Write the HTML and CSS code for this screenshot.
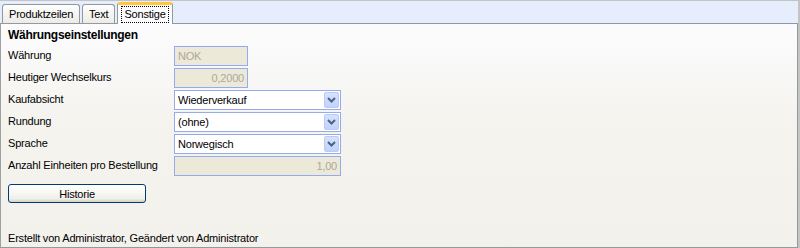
FILE: index.html
```html
<!DOCTYPE html>
<html lang="de">
<head>
    <meta charset="UTF-8">
    <title>Sonstige</title>
    <link rel="stylesheet" href="styles.css">
</head>
<body>
    <div class="window">
        <div class="tab-strip">
            <div class="tab">Produktzeilen</div>
            <div class="tab">Text</div>
            <div class="tab active"><span class="focus">Sonstige</span></div>
        </div>
        <div class="tab-page">
            <h1>Währungseinstellungen</h1>
            <div class="fields">
                <label>Währung</label>
                <div class="input short disabled">NOK</div>

                <label>Heutiger Wechselkurs</label>
                <div class="input short disabled num">0,2000</div>

                <label>Kaufabsicht</label>
                <div class="input select">
                    <span>Wiederverkauf</span>
                    <span class="drop"><svg width="9" height="6" viewBox="0 0 9 6"><path d="M1 1 L4.5 4.5 L8 1" fill="none" stroke="#4d6185" stroke-width="2"/></svg></span>
                </div>

                <label>Rundung</label>
                <div class="input select">
                    <span>(ohne)</span>
                    <span class="drop"><svg width="9" height="6" viewBox="0 0 9 6"><path d="M1 1 L4.5 4.5 L8 1" fill="none" stroke="#4d6185" stroke-width="2"/></svg></span>
                </div>

                <label>Sprache</label>
                <div class="input select">
                    <span>Norwegisch</span>
                    <span class="drop"><svg width="9" height="6" viewBox="0 0 9 6"><path d="M1 1 L4.5 4.5 L8 1" fill="none" stroke="#4d6185" stroke-width="2"/></svg></span>
                </div>

                <label>Anzahl Einheiten pro Bestellung</label>
                <div class="input disabled num">1,00</div>
            </div>
            <button type="button">Historie</button>
            <div class="footer">Erstellt von Administrator, Geändert von Administrator</div>
        </div>
    </div>
</body>
</html>
```

FILE: styles.css
```css
body {
    margin: 0;
    font-family: "Liberation Sans", Arial, sans-serif;
    font-size: 11px;
    letter-spacing: -0.2px;
    color: #000;
    background-color: #c4c4c4;
}

.window {
    width: 798px;
    height: 247px;
    margin-top: 1px;
    display: flex;
    flex-direction: column;
    background-color: #e6eefe;
}

.tab-strip {
    display: flex;
    align-items: flex-end;
    height: 22px;
    padding-left: 2px;
    gap: 2px;
}

.tab {
    height: 19px;
    padding: 0 6px;
    line-height: 18px;
    border: 1px solid #919b9c;
    border-bottom: none;
    border-radius: 3px 3px 0 0;
    background: linear-gradient(#fefefe, #ecebe6);
    box-sizing: border-box;
}

.tab.active {
    height: 22px;
    padding: 1px 3px 0;
    line-height: 15px;
    background: #fcfcfe;
    border-top: 3px solid #ffc83c;
    position: relative;
    top: 1px;
}

.focus {
    display: block;
    padding: 0 2px;
    border: 1px dotted #000;
}

.tab-page {
    flex: 1;
    display: flex;
    flex-direction: column;
    border: 1px solid #919b9c;
    border-left-color: #a0a0a0;
    background: linear-gradient(#fcfcfe, #f4f3ee 45%, #f3f1ec);
    padding: 4px 7px 0;
}

h1 {
    font-size: 12px;
    letter-spacing: -0.3px;
    font-weight: bold;
    margin: 0 0 3px;
    line-height: 15px;
}

.fields {
    display: grid;
    grid-template-columns: 166px auto;
    grid-auto-rows: 20px;
    row-gap: 2px;
    align-items: center;
}

label {
    padding-bottom: 2px;
    white-space: nowrap;
}

.input {
    box-sizing: border-box;
    height: 20px;
    width: 167px;
    border: 1px solid #94acef;
    background: #fff;
    line-height: 18px;
    padding: 0 3px;
}

.input.short {
    width: 74px;
}

.input.disabled {
    background: #ece9d8;
    color: #aca899;
}

.input.num {
    text-align: right;
}

.select {
    display: flex;
    justify-content: space-between;
    align-items: center;
    padding-right: 1px;
}

.drop {
    width: 15px;
    height: 16px;
    display: flex;
    justify-content: center;
    align-items: center;
    background: linear-gradient(#d6e2fd, #c1d3fb);
    border: 1px solid #b9cbf3;
    border-radius: 2px;
    box-sizing: border-box;
}

button {
    margin-top: 8px;
    width: 138px;
    height: 19px;
    font-family: inherit;
    font-size: 11px;
    letter-spacing: -0.2px;
    border: 1px solid #003c74;
    border-radius: 3px;
    background: linear-gradient(#ffffff, #f0f0ea 80%, #d6d0c5);
    padding: 0;
}

.footer {
    margin-top: auto;
    padding-bottom: 3px;
}
```
